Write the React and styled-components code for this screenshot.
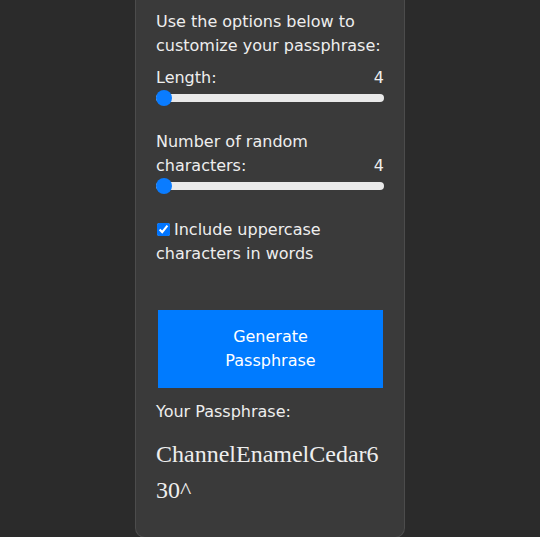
import React, { useState } from "react";
import styled, { createGlobalStyle } from "styled-components";

const GlobalStyle = createGlobalStyle`
  *, *::before, *::after { box-sizing: border-box; }
  html, body { margin: 0; padding: 0; }
  body {
    background: #2b2b2b;
    color: #eeeeee;
    font-family: "DejaVu Sans", sans-serif;
    font-size: 16px;
    line-height: 24px;
  }
`;

const Page = styled.main`
  display: flex;
  justify-content: center;
  min-height: 100vh;
`;

const Card = styled.section`
  width: 270px;
  background: #3a3a3a;
  border: 1px solid #4c4c4c;
  border-top: none;
  border-radius: 0 0 10px 10px;
  padding: 10px 20px 29px;
  align-self: flex-start;
`;

const Intro = styled.p`
  margin: 0 0 8px;
`;

const Field = styled.div`
  margin-bottom: 24px;
`;

const LabelRow = styled.div`
  display: flex;
  justify-content: space-between;
  align-items: flex-end;
  gap: 12px;
`;

const Slider = styled.input`
  -webkit-appearance: none;
  appearance: none;
  display: block;
  width: 100%;
  height: 16px;
  margin: 0;
  background: transparent;

  &::-webkit-slider-runnable-track {
    height: 8px;
    border-radius: 4px;
    background: #e9e9e9;
  }

  &::-webkit-slider-thumb {
    -webkit-appearance: none;
    width: 16px;
    height: 16px;
    margin-top: -4px;
    border-radius: 50%;
    background: #0a7cff;
    border: none;
  }
`;

const CheckLabel = styled.label`
  display: block;
  margin-bottom: 44px;

  input {
    margin: 0 4px 0 1px;
    width: 13px;
    height: 13px;
    vertical-align: -1px;
  }
`;

const Button = styled.button`
  display: block;
  width: 225px;
  margin: 0 2px 12px;
  padding: 15px 40px;
  border: none;
  background: #007bff;
  color: #ffffff;
  font-family: "DejaVu Sans", sans-serif;
  font-size: 16px;
  line-height: 24px;
  cursor: pointer;
`;

const ResultLabel = styled.div`
  margin-bottom: 12px;
`;

const Passphrase = styled.div`
  font-family: "Liberation Serif", serif;
  font-size: 24px;
  line-height: 36px;
  word-break: break-all;
`;

function App() {
  const [length, setLength] = useState(4);
  const [randoms, setRandoms] = useState(4);
  const [upper, setUpper] = useState(true);

  return (
    <Page>
      <GlobalStyle />
      <Card>
        <Intro>Use the options below to customize your passphrase:</Intro>
        <Field>
          <LabelRow>
            <span>Length:</span>
            <span>{length}</span>
          </LabelRow>
          <Slider
            type="range"
            min={4}
            max={10}
            value={length}
            onChange={(e) => setLength(+e.target.value)}
          />
        </Field>
        <Field>
          <LabelRow>
            <span>Number of random characters:</span>
            <span>{randoms}</span>
          </LabelRow>
          <Slider
            type="range"
            min={4}
            max={10}
            value={randoms}
            onChange={(e) => setRandoms(+e.target.value)}
          />
        </Field>
        <CheckLabel>
          <input
            type="checkbox"
            checked={upper}
            onChange={(e) => setUpper(e.target.checked)}
          />
          Include uppercase characters in words
        </CheckLabel>
        <Button>Generate Passphrase</Button>
        <ResultLabel>Your Passphrase:</ResultLabel>
        <Passphrase>ChannelEnamelCedar630^</Passphrase>
      </Card>
    </Page>
  );
}

export default App;
